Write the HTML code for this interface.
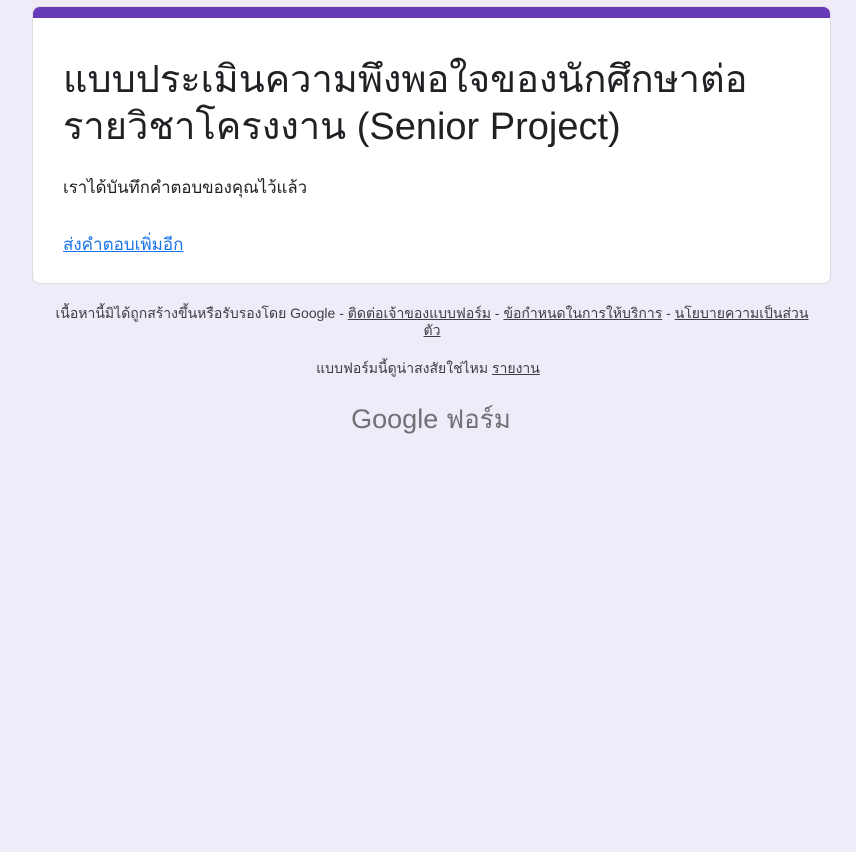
<!DOCTYPE html>
<html><head><meta charset="utf-8"><style>
html,body{margin:0;padding:0;background:#efebf8;width:856px;height:852px;overflow:hidden;font-family:"Liberation Sans",sans-serif;}
.card{position:absolute;left:32px;top:6px;width:799px;height:278px;background:#fff;border:1px solid #dadce0;border-radius:8px;overflow:hidden;box-sizing:border-box;}
.bar{height:11px;background:#673ab7;}
h1{margin:0;position:absolute;left:30px;top:50px;font-size:38px;line-height:47px;font-weight:400;color:#202124;width:750px;}
.msg{position:absolute;left:30px;top:168px;font-size:16.8px;color:#202124;}
.more{position:absolute;left:30px;top:224px;font-size:17px;color:#1a73e8;text-decoration:underline;}
.foot{position:absolute;left:52px;width:760px;top:305px;text-align:center;font-size:14px;line-height:17px;color:#3c4043;}
.rep{position:absolute;left:0;width:856px;top:358px;text-align:center;font-size:14px;color:#3c4043;}
.logo{position:absolute;left:3px;width:856px;top:399px;text-align:center;font-size:27px;color:#717074;}
</style></head><body>
<div class="card"><div class="bar"></div>
<h1>แบบประเมินความพึงพอใจของนักศึกษาต่อ รายวิชาโครงงาน (Senior Project)</h1>
<div class="msg">เราได้บันทึกคำตอบของคุณไว้แล้ว</div>
<div class="more">ส่งคำตอบเพิ่มอีก</div>
</div>
<div class="foot">เนื้อหานี้มิได้ถูกสร้างขึ้นหรือรับรองโดย Google - <u>ติดต่อเจ้าของแบบฟอร์ม</u> - <u>ข้อกำหนดในการให้บริการ</u> - <u>นโยบายความเป็นส่วน ตัว</u></div>
<div class="rep">แบบฟอร์มนี้ดูน่าสงสัยใช่ไหม <u>รายงาน</u></div>
<div class="logo">Google <span style="font-size:26px">ฟอร์ม</span></div>
</body></html>
